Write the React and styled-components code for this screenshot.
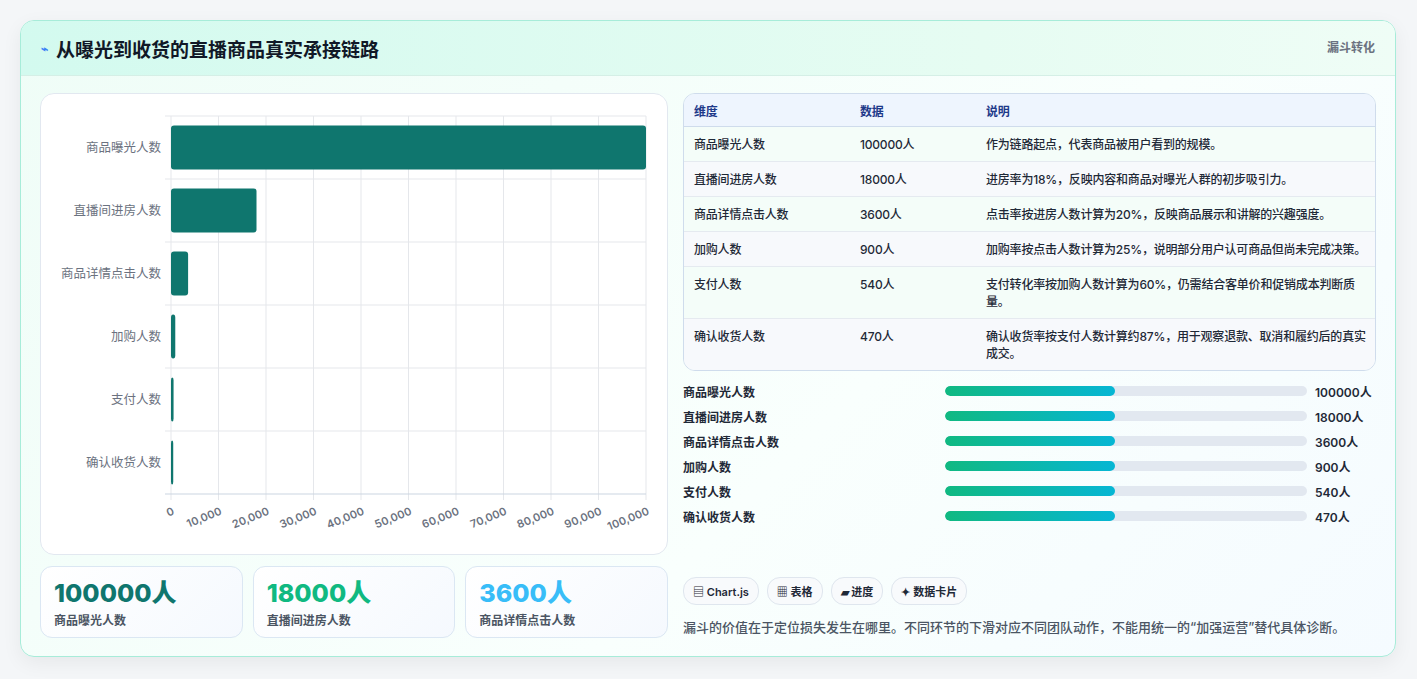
import React from "react";
import styled, { createGlobalStyle } from "styled-components";

const G = createGlobalStyle`
  body{margin:0;background:#f4f6f8;font-family:Inter,"Noto Sans CJK SC",sans-serif;}
`;
const Page = styled.div`padding:20px 21px 21px 20px;`;
const Card = styled.div`
  background:linear-gradient(135deg,#effdf7,#f9fffd 60%,#f5fbff);
  border:1px solid #a7ecd9;border-radius:14px;overflow:hidden;
  box-shadow:0 6px 20px rgba(0,0,0,0.06);
`;
const Header = styled.div`
  height:54px;display:flex;align-items:center;justify-content:space-between;
  padding:0 20px;background:linear-gradient(90deg,#d3faef,#e6fcf2 70%,#effdf6);
  border-bottom:1px solid #d5efe6;
`;
const Title = styled.h1`margin:0;font-size:19px;font-weight:700;color:#111827;display:flex;align-items:center;gap:8px;`;
const Tag = styled.span`font-size:12px;font-weight:700;color:#6b7280;align-self:flex-start;margin-top:17px;`;
const Body = styled.div`display:grid;grid-template-columns:628px 1fr;gap:15px;padding:17px 19px 18px 19px;`;
const Col = styled.div`display:flex;flex-direction:column;`;
const ChartBox = styled.div`height:460px;background:#fff;border:1px solid #e2e8f0;border-radius:14px;`;
const Stats = styled.div`display:grid;grid-template-columns:repeat(3,1fr);gap:10px;margin-top:11px;`;
const Stat = styled.div`height:72px;border:1px solid #dbe7f3;border-radius:12px;background:linear-gradient(135deg,#fff,#f5f9fe);padding:10px 13px;box-sizing:border-box;`;
const Num = styled.div`font-size:25px;font-weight:800;color:${p=>p.c};line-height:32px;`;
const SLabel = styled.div`font-size:12px;color:#4b5563;font-weight:600;margin-top:2px;`;
const Table = styled.table`width:100%;border-collapse:separate;border-spacing:0;border:1px solid #cfdcec;border-radius:12px;overflow:hidden;font-size:12px;letter-spacing:-0.2px;`;
const Th = styled.th`text-align:left;font-weight:600;color:#1e3a8a;background:#eef5fe;height:32px;padding:0 10px;border-bottom:1px solid #cfdcec;`;
const Td = styled.td`padding:9px 4px 8px 10px;color:#1f2937;font-weight:500;line-height:17px;vertical-align:top;background:${p=>p.alt?"#f7f9fc":"#f4fdf9"};border-bottom:${p=>p.last?"none":"1px solid #e5eaf0"};`;
const Bars = styled.div`display:flex;flex-direction:column;gap:7px;margin-top:11px;`;
const BarRow = styled.div`display:grid;grid-template-columns:262px 362px 1fr;align-items:center;font-size:12px;font-weight:600;color:#1f2937;height:18px;white-space:nowrap;`;
const Track = styled.div`height:10px;background:#e2e8f0;border-radius:5px;overflow:hidden;`;
const Fill = styled.div`height:100%;width:47%;border-radius:5px;background:linear-gradient(90deg,#10b981,#06b6d4);`;
const Val = styled.span`padding-left:8px;`;
const Chips = styled.div`display:flex;gap:8px;margin-top:52px;`;
const Chip = styled.span`height:26px;padding:0 9px;border:1px solid #dfe6ee;border-radius:13px;background:#f8fafc;font-size:11px;font-weight:600;color:#1f2937;display:flex;align-items:center;gap:3px;`;
const Foot = styled.p`margin:12px 0 0;font-size:13px;font-weight:500;color:#4b5563;`;

const rows=[["商品曝光人数","100000人","作为链路起点，代表商品被用户看到的规模。",100000],
["直播间进房人数","18000人","进房率为18%，反映内容和商品对曝光人群的初步吸引力。",18000],
["商品详情点击人数","3600人","点击率按进房人数计算为20%，反映商品展示和讲解的兴趣强度。",3600],
["加购人数","900人","加购率按点击人数计算为25%，说明部分用户认可商品但尚未完成决策。",900],
["支付人数","540人","支付转化率按加购人数计算为60%，仍需结合客单价和促销成本判断质量。",540],
["确认收货人数","470人","确认收货率按支付人数计算约87%，用于观察退款、取消和履约后的真实成交。",470]];

function Chart(){
  const x0=130,x1=605,y0=22,y1=400,rh=(y1-y0)/6;
  const ticks=[...Array(11)].map((_,i)=>i);
  return <svg width="626" height="460" style={{display:"block"}}>
    {ticks.map(i=>{const x=x0+i*(x1-x0)/10;return <g key={i}>
      <line x1={x} x2={x} y1={y0} y2={y1+6} stroke="#e5e7eb"/>
      <text x={x+4} y={y1+20} fontSize="11" fontWeight="600" fill="#6b7280" textAnchor="end" transform={`rotate(-22 ${x+4} ${y1+20})`} fontFamily="Inter">{i===0?"0":(i*10000).toLocaleString("en")}</text></g>})}
    {[...Array(7)].map((_,i)=><line key={i} x1={x0-6} x2={x1} y1={y0+i*rh} y2={y0+i*rh} stroke={i===6?"#cbd5e1":"#e5e7eb"}/>)}
    {rows.map((r,i)=>{const yc=y0+i*rh+rh/2;const w=Math.max(2,(x1-x0)*r[3]/100000);return <g key={i}>
      <text x={x0-10} y={yc+4} fontSize="12.5" fill="#6b7280" textAnchor="end" fontFamily="Noto Sans CJK SC">{r[0]}</text>
      <rect x={x0} y={yc-22} width={w} height={44} rx="3" fill="#0f766e"/></g>})}
  </svg>;
}

export default function App(){
  return <Page><G/><Card>
    <Header><Title><span style={{color:"#3b82f6",fontSize:12}}>⌁</span>从曝光到收货的直播商品真实承接链路</Title><Tag>漏斗转化</Tag></Header>
    <Body>
      <Col>
        <ChartBox><Chart/></ChartBox>
        <Stats>
          <Stat><Num c="#0f766e">100000人</Num><SLabel>商品曝光人数</SLabel></Stat>
          <Stat><Num c="#10b981">18000人</Num><SLabel>直播间进房人数</SLabel></Stat>
          <Stat><Num c="#38bdf8">3600人</Num><SLabel>商品详情点击人数</SLabel></Stat>
        </Stats>
      </Col>
      <Col>
        <Table><thead><tr><Th style={{width:146}}>维度</Th><Th style={{width:106}}>数据</Th><Th>说明</Th></tr></thead>
          <tbody>{rows.map((r,i)=><tr key={i}>{[0,1,2].map(j=><Td key={j} alt={i%2===1} last={i===5}>{r[j]}</Td>)}</tr>)}</tbody>
        </Table>
        <Bars>{rows.map((r,i)=><BarRow key={i}><span>{r[0]}</span><Track><Fill/></Track><Val>{r[1]}</Val></BarRow>)}</Bars>
        <Chips><Chip>▤ Chart.js</Chip><Chip>▦ 表格</Chip><Chip>▰ 进度</Chip><Chip>✦ 数据卡片</Chip></Chips>
        <Foot>漏斗的价值在于定位损失发生在哪里。不同环节的下滑对应不同团队动作，不能用统一的“加强运营”替代具体诊断。</Foot>
      </Col>
    </Body>
  </Card></Page>;
}
